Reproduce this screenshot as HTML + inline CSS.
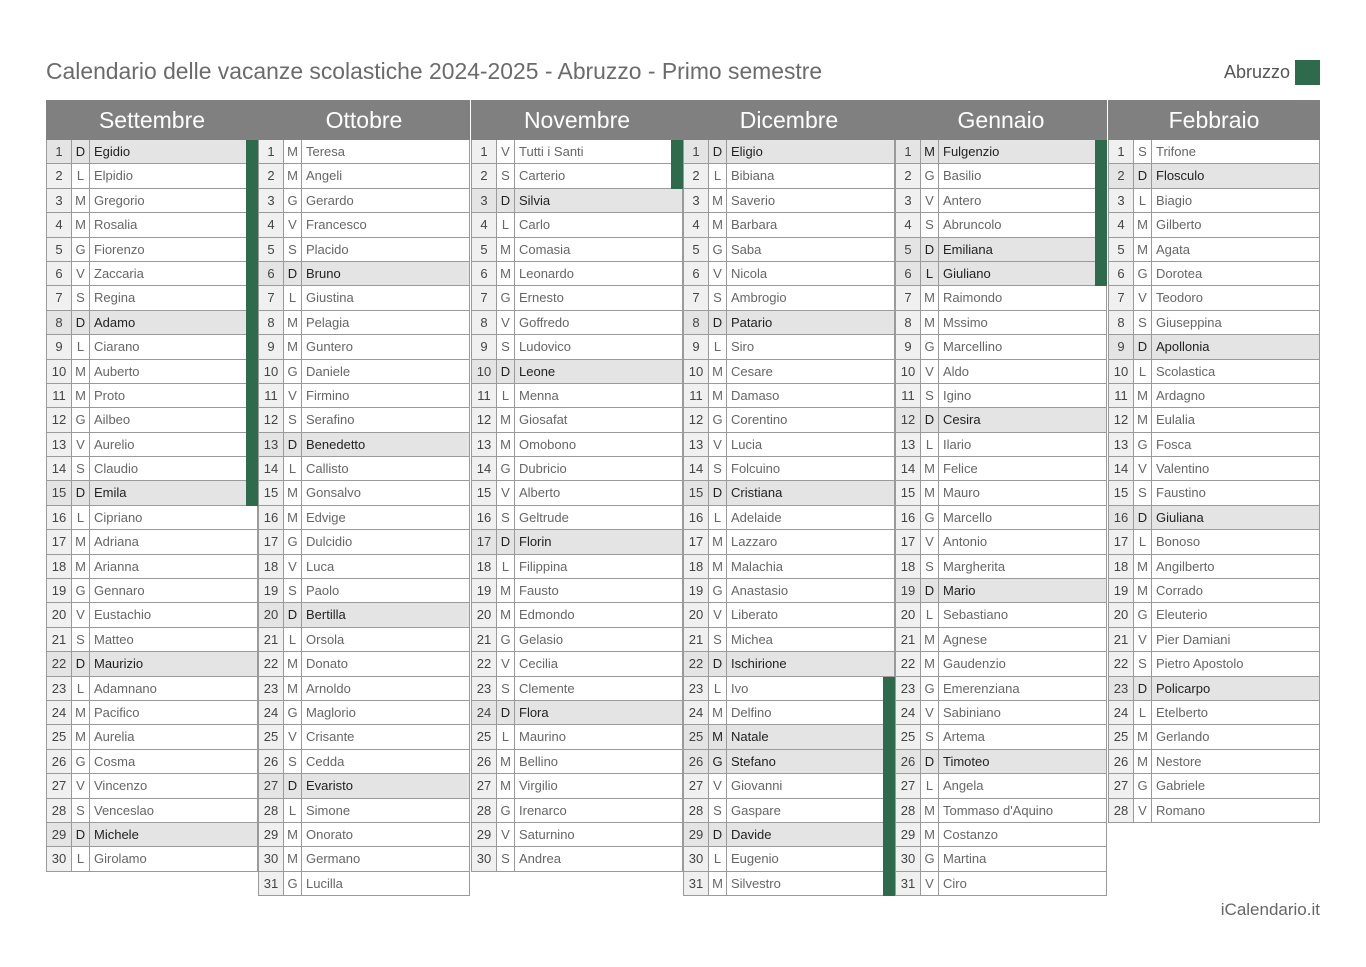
<!DOCTYPE html>
<html><head><meta charset="utf-8"><style>
body{margin:0;width:1366px;height:967px;background:#fff;font-family:"Liberation Sans",sans-serif;position:relative;overflow:hidden}
.t{position:absolute;left:46px;top:58px;font-size:22.9px;color:#6b6b6b}
.lg{position:absolute;left:1224px;top:62px;font-size:18px;color:#555}
.sq{position:absolute;left:1295px;top:60px;width:25px;height:25px;background:#2e6b4c}
.ft{position:absolute;right:46px;top:900px;font-size:17px;color:#666}
.c{position:absolute;top:100px;width:212px}
.h{height:40px;background:#808080;color:#fff;font-size:23px;text-align:center;line-height:40px}
.r{position:relative;height:23.4px;border:1px solid #9a9a9a;border-top:none;display:flex;font-size:13px;line-height:23.4px;color:#666;background:#fff}
.r b{font-weight:normal;width:24px;text-align:center;background:#f0f0f0;border-right:1px solid #9a9a9a;color:#444}
.r i{font-style:normal;width:17px;text-align:center;border-right:1px solid #9a9a9a}
.r span{padding-left:4px;flex:1}
.s{background:#e4e4e4;color:#222}
.s b{background:#e4e4e4}
.g::after{content:"";position:absolute;right:-1px;top:0;bottom:-1px;width:12px;background:#2e6b4c}
</style></head><body>
<div class="t">Calendario delle vacanze scolastiche 2024-2025 - Abruzzo - Primo semestre</div>
<div class="lg">Abruzzo</div><div class="sq"></div>

<div class="c" style="left:46px"><div class="h">Settembre</div>
<div class="r s g"><b>1</b><i>D</i><span>Egidio</span></div>
<div class="r g"><b>2</b><i>L</i><span>Elpidio</span></div>
<div class="r g"><b>3</b><i>M</i><span>Gregorio</span></div>
<div class="r g"><b>4</b><i>M</i><span>Rosalia</span></div>
<div class="r g"><b>5</b><i>G</i><span>Fiorenzo</span></div>
<div class="r g"><b>6</b><i>V</i><span>Zaccaria</span></div>
<div class="r g"><b>7</b><i>S</i><span>Regina</span></div>
<div class="r s g"><b>8</b><i>D</i><span>Adamo</span></div>
<div class="r g"><b>9</b><i>L</i><span>Ciarano</span></div>
<div class="r g"><b>10</b><i>M</i><span>Auberto</span></div>
<div class="r g"><b>11</b><i>M</i><span>Proto</span></div>
<div class="r g"><b>12</b><i>G</i><span>Ailbeo</span></div>
<div class="r g"><b>13</b><i>V</i><span>Aurelio</span></div>
<div class="r g"><b>14</b><i>S</i><span>Claudio</span></div>
<div class="r s g"><b>15</b><i>D</i><span>Emila</span></div>
<div class="r"><b>16</b><i>L</i><span>Cipriano</span></div>
<div class="r"><b>17</b><i>M</i><span>Adriana</span></div>
<div class="r"><b>18</b><i>M</i><span>Arianna</span></div>
<div class="r"><b>19</b><i>G</i><span>Gennaro</span></div>
<div class="r"><b>20</b><i>V</i><span>Eustachio</span></div>
<div class="r"><b>21</b><i>S</i><span>Matteo</span></div>
<div class="r s"><b>22</b><i>D</i><span>Maurizio</span></div>
<div class="r"><b>23</b><i>L</i><span>Adamnano</span></div>
<div class="r"><b>24</b><i>M</i><span>Pacifico</span></div>
<div class="r"><b>25</b><i>M</i><span>Aurelia</span></div>
<div class="r"><b>26</b><i>G</i><span>Cosma</span></div>
<div class="r"><b>27</b><i>V</i><span>Vincenzo</span></div>
<div class="r"><b>28</b><i>S</i><span>Venceslao</span></div>
<div class="r s"><b>29</b><i>D</i><span>Michele</span></div>
<div class="r"><b>30</b><i>L</i><span>Girolamo</span></div>
</div>

<div class="c" style="left:258px"><div class="h">Ottobre</div>
<div class="r"><b>1</b><i>M</i><span>Teresa</span></div>
<div class="r"><b>2</b><i>M</i><span>Angeli</span></div>
<div class="r"><b>3</b><i>G</i><span>Gerardo</span></div>
<div class="r"><b>4</b><i>V</i><span>Francesco</span></div>
<div class="r"><b>5</b><i>S</i><span>Placido</span></div>
<div class="r s"><b>6</b><i>D</i><span>Bruno</span></div>
<div class="r"><b>7</b><i>L</i><span>Giustina</span></div>
<div class="r"><b>8</b><i>M</i><span>Pelagia</span></div>
<div class="r"><b>9</b><i>M</i><span>Guntero</span></div>
<div class="r"><b>10</b><i>G</i><span>Daniele</span></div>
<div class="r"><b>11</b><i>V</i><span>Firmino</span></div>
<div class="r"><b>12</b><i>S</i><span>Serafino</span></div>
<div class="r s"><b>13</b><i>D</i><span>Benedetto</span></div>
<div class="r"><b>14</b><i>L</i><span>Callisto</span></div>
<div class="r"><b>15</b><i>M</i><span>Gonsalvo</span></div>
<div class="r"><b>16</b><i>M</i><span>Edvige</span></div>
<div class="r"><b>17</b><i>G</i><span>Dulcidio</span></div>
<div class="r"><b>18</b><i>V</i><span>Luca</span></div>
<div class="r"><b>19</b><i>S</i><span>Paolo</span></div>
<div class="r s"><b>20</b><i>D</i><span>Bertilla</span></div>
<div class="r"><b>21</b><i>L</i><span>Orsola</span></div>
<div class="r"><b>22</b><i>M</i><span>Donato</span></div>
<div class="r"><b>23</b><i>M</i><span>Arnoldo</span></div>
<div class="r"><b>24</b><i>G</i><span>Maglorio</span></div>
<div class="r"><b>25</b><i>V</i><span>Crisante</span></div>
<div class="r"><b>26</b><i>S</i><span>Cedda</span></div>
<div class="r s"><b>27</b><i>D</i><span>Evaristo</span></div>
<div class="r"><b>28</b><i>L</i><span>Simone</span></div>
<div class="r"><b>29</b><i>M</i><span>Onorato</span></div>
<div class="r"><b>30</b><i>M</i><span>Germano</span></div>
<div class="r"><b>31</b><i>G</i><span>Lucilla</span></div>
</div>

<div class="c" style="left:471px"><div class="h">Novembre</div>
<div class="r g"><b>1</b><i>V</i><span>Tutti i Santi</span></div>
<div class="r g"><b>2</b><i>S</i><span>Carterio</span></div>
<div class="r s"><b>3</b><i>D</i><span>Silvia</span></div>
<div class="r"><b>4</b><i>L</i><span>Carlo</span></div>
<div class="r"><b>5</b><i>M</i><span>Comasia</span></div>
<div class="r"><b>6</b><i>M</i><span>Leonardo</span></div>
<div class="r"><b>7</b><i>G</i><span>Ernesto</span></div>
<div class="r"><b>8</b><i>V</i><span>Goffredo</span></div>
<div class="r"><b>9</b><i>S</i><span>Ludovico</span></div>
<div class="r s"><b>10</b><i>D</i><span>Leone</span></div>
<div class="r"><b>11</b><i>L</i><span>Menna</span></div>
<div class="r"><b>12</b><i>M</i><span>Giosafat</span></div>
<div class="r"><b>13</b><i>M</i><span>Omobono</span></div>
<div class="r"><b>14</b><i>G</i><span>Dubricio</span></div>
<div class="r"><b>15</b><i>V</i><span>Alberto</span></div>
<div class="r"><b>16</b><i>S</i><span>Geltrude</span></div>
<div class="r s"><b>17</b><i>D</i><span>Florin</span></div>
<div class="r"><b>18</b><i>L</i><span>Filippina</span></div>
<div class="r"><b>19</b><i>M</i><span>Fausto</span></div>
<div class="r"><b>20</b><i>M</i><span>Edmondo</span></div>
<div class="r"><b>21</b><i>G</i><span>Gelasio</span></div>
<div class="r"><b>22</b><i>V</i><span>Cecilia</span></div>
<div class="r"><b>23</b><i>S</i><span>Clemente</span></div>
<div class="r s"><b>24</b><i>D</i><span>Flora</span></div>
<div class="r"><b>25</b><i>L</i><span>Maurino</span></div>
<div class="r"><b>26</b><i>M</i><span>Bellino</span></div>
<div class="r"><b>27</b><i>M</i><span>Virgilio</span></div>
<div class="r"><b>28</b><i>G</i><span>Irenarco</span></div>
<div class="r"><b>29</b><i>V</i><span>Saturnino</span></div>
<div class="r"><b>30</b><i>S</i><span>Andrea</span></div>
</div>

<div class="c" style="left:683px"><div class="h">Dicembre</div>
<div class="r s"><b>1</b><i>D</i><span>Eligio</span></div>
<div class="r"><b>2</b><i>L</i><span>Bibiana</span></div>
<div class="r"><b>3</b><i>M</i><span>Saverio</span></div>
<div class="r"><b>4</b><i>M</i><span>Barbara</span></div>
<div class="r"><b>5</b><i>G</i><span>Saba</span></div>
<div class="r"><b>6</b><i>V</i><span>Nicola</span></div>
<div class="r"><b>7</b><i>S</i><span>Ambrogio</span></div>
<div class="r s"><b>8</b><i>D</i><span>Patario</span></div>
<div class="r"><b>9</b><i>L</i><span>Siro</span></div>
<div class="r"><b>10</b><i>M</i><span>Cesare</span></div>
<div class="r"><b>11</b><i>M</i><span>Damaso</span></div>
<div class="r"><b>12</b><i>G</i><span>Corentino</span></div>
<div class="r"><b>13</b><i>V</i><span>Lucia</span></div>
<div class="r"><b>14</b><i>S</i><span>Folcuino</span></div>
<div class="r s"><b>15</b><i>D</i><span>Cristiana</span></div>
<div class="r"><b>16</b><i>L</i><span>Adelaide</span></div>
<div class="r"><b>17</b><i>M</i><span>Lazzaro</span></div>
<div class="r"><b>18</b><i>M</i><span>Malachia</span></div>
<div class="r"><b>19</b><i>G</i><span>Anastasio</span></div>
<div class="r"><b>20</b><i>V</i><span>Liberato</span></div>
<div class="r"><b>21</b><i>S</i><span>Michea</span></div>
<div class="r s"><b>22</b><i>D</i><span>Ischirione</span></div>
<div class="r g"><b>23</b><i>L</i><span>Ivo</span></div>
<div class="r g"><b>24</b><i>M</i><span>Delfino</span></div>
<div class="r s g"><b>25</b><i>M</i><span>Natale</span></div>
<div class="r s g"><b>26</b><i>G</i><span>Stefano</span></div>
<div class="r g"><b>27</b><i>V</i><span>Giovanni</span></div>
<div class="r g"><b>28</b><i>S</i><span>Gaspare</span></div>
<div class="r s g"><b>29</b><i>D</i><span>Davide</span></div>
<div class="r g"><b>30</b><i>L</i><span>Eugenio</span></div>
<div class="r g"><b>31</b><i>M</i><span>Silvestro</span></div>
</div>

<div class="c" style="left:895px"><div class="h">Gennaio</div>
<div class="r s g"><b>1</b><i>M</i><span>Fulgenzio</span></div>
<div class="r g"><b>2</b><i>G</i><span>Basilio</span></div>
<div class="r g"><b>3</b><i>V</i><span>Antero</span></div>
<div class="r g"><b>4</b><i>S</i><span>Abruncolo</span></div>
<div class="r s g"><b>5</b><i>D</i><span>Emiliana</span></div>
<div class="r s g"><b>6</b><i>L</i><span>Giuliano</span></div>
<div class="r"><b>7</b><i>M</i><span>Raimondo</span></div>
<div class="r"><b>8</b><i>M</i><span>Mssimo</span></div>
<div class="r"><b>9</b><i>G</i><span>Marcellino</span></div>
<div class="r"><b>10</b><i>V</i><span>Aldo</span></div>
<div class="r"><b>11</b><i>S</i><span>Igino</span></div>
<div class="r s"><b>12</b><i>D</i><span>Cesira</span></div>
<div class="r"><b>13</b><i>L</i><span>Ilario</span></div>
<div class="r"><b>14</b><i>M</i><span>Felice</span></div>
<div class="r"><b>15</b><i>M</i><span>Mauro</span></div>
<div class="r"><b>16</b><i>G</i><span>Marcello</span></div>
<div class="r"><b>17</b><i>V</i><span>Antonio</span></div>
<div class="r"><b>18</b><i>S</i><span>Margherita</span></div>
<div class="r s"><b>19</b><i>D</i><span>Mario</span></div>
<div class="r"><b>20</b><i>L</i><span>Sebastiano</span></div>
<div class="r"><b>21</b><i>M</i><span>Agnese</span></div>
<div class="r"><b>22</b><i>M</i><span>Gaudenzio</span></div>
<div class="r"><b>23</b><i>G</i><span>Emerenziana</span></div>
<div class="r"><b>24</b><i>V</i><span>Sabiniano</span></div>
<div class="r"><b>25</b><i>S</i><span>Artema</span></div>
<div class="r s"><b>26</b><i>D</i><span>Timoteo</span></div>
<div class="r"><b>27</b><i>L</i><span>Angela</span></div>
<div class="r"><b>28</b><i>M</i><span>Tommaso d'Aquino</span></div>
<div class="r"><b>29</b><i>M</i><span>Costanzo</span></div>
<div class="r"><b>30</b><i>G</i><span>Martina</span></div>
<div class="r"><b>31</b><i>V</i><span>Ciro</span></div>
</div>

<div class="c" style="left:1108px"><div class="h">Febbraio</div>
<div class="r"><b>1</b><i>S</i><span>Trifone</span></div>
<div class="r s"><b>2</b><i>D</i><span>Flosculo</span></div>
<div class="r"><b>3</b><i>L</i><span>Biagio</span></div>
<div class="r"><b>4</b><i>M</i><span>Gilberto</span></div>
<div class="r"><b>5</b><i>M</i><span>Agata</span></div>
<div class="r"><b>6</b><i>G</i><span>Dorotea</span></div>
<div class="r"><b>7</b><i>V</i><span>Teodoro</span></div>
<div class="r"><b>8</b><i>S</i><span>Giuseppina</span></div>
<div class="r s"><b>9</b><i>D</i><span>Apollonia</span></div>
<div class="r"><b>10</b><i>L</i><span>Scolastica</span></div>
<div class="r"><b>11</b><i>M</i><span>Ardagno</span></div>
<div class="r"><b>12</b><i>M</i><span>Eulalia</span></div>
<div class="r"><b>13</b><i>G</i><span>Fosca</span></div>
<div class="r"><b>14</b><i>V</i><span>Valentino</span></div>
<div class="r"><b>15</b><i>S</i><span>Faustino</span></div>
<div class="r s"><b>16</b><i>D</i><span>Giuliana</span></div>
<div class="r"><b>17</b><i>L</i><span>Bonoso</span></div>
<div class="r"><b>18</b><i>M</i><span>Angilberto</span></div>
<div class="r"><b>19</b><i>M</i><span>Corrado</span></div>
<div class="r"><b>20</b><i>G</i><span>Eleuterio</span></div>
<div class="r"><b>21</b><i>V</i><span>Pier Damiani</span></div>
<div class="r"><b>22</b><i>S</i><span>Pietro Apostolo</span></div>
<div class="r s"><b>23</b><i>D</i><span>Policarpo</span></div>
<div class="r"><b>24</b><i>L</i><span>Etelberto</span></div>
<div class="r"><b>25</b><i>M</i><span>Gerlando</span></div>
<div class="r"><b>26</b><i>M</i><span>Nestore</span></div>
<div class="r"><b>27</b><i>G</i><span>Gabriele</span></div>
<div class="r"><b>28</b><i>V</i><span>Romano</span></div>
</div>

<div class="ft">iCalendario.it</div>
</body></html>
